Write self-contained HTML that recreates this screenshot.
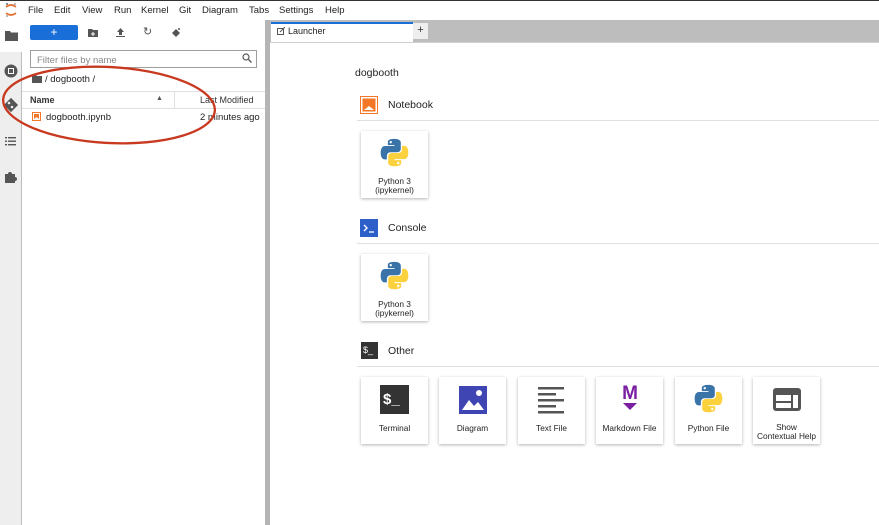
<!DOCTYPE html>
<html><head><style>
*{box-sizing:border-box;margin:0;padding:0}
body{width:879px;height:525px;overflow:hidden;background:#fff;font-family:"Liberation Sans",Arial,sans-serif;position:relative;color:#222}
.a{position:absolute}
.menu span{position:absolute;top:5px;font-size:9.5px;color:#222}
.card{position:absolute;width:67px;height:67px;background:#fff;box-shadow:0 1px 3px rgba(0,0,0,.3);text-align:center;font-size:8.3px;color:#222}
.card .lbl{position:absolute;left:0;right:0;top:46px;line-height:9px}
.hdr{position:absolute;left:388px;font-size:10.5px;color:#222}
.line{position:absolute;left:357px;right:0;height:1px;background:#e0e0e0}
</style></head><body>
<div class="a" style="left:0;top:0;width:879px;height:1px;background:#333"></div>
<svg class="a" style="left:4px;top:2px" width="14" height="16" viewBox="0 0 14 16"><path d="M2 5 Q7 1 12 5" stroke="#e46e2e" stroke-width="1.6" fill="none"/><path d="M2 11 Q7 15 12 11" stroke="#e46e2e" stroke-width="1.6" fill="none"/><circle cx="3" cy="2" r="1" fill="#666"/><circle cx="11" cy="2" r=".8" fill="#666"/><circle cx="3" cy="14" r=".8" fill="#666"/></svg>
<div class="menu">
<span style="left:28px">File</span><span style="left:54px">Edit</span><span style="left:82px">View</span><span style="left:114px">Run</span><span style="left:141px">Kernel</span><span style="left:179px">Git</span><span style="left:202px">Diagram</span><span style="left:249px">Tabs</span><span style="left:279px">Settings</span><span style="left:325px">Help</span>
</div>
<div class="a" style="left:0;top:20px;width:22px;height:505px;background:#eeeeee;border-right:1px solid #bdbdbd"></div>
<div class="a" style="left:0;top:20px;width:22px;height:32px;background:#fff"></div>
<svg class="a" style="left:5px;top:30px" width="13" height="11"><path d="M0 1h5l1 1.5h7v8.5h-13z" fill="#555"/></svg>
<svg class="a" style="left:4px;top:64px" width="14" height="14"><circle cx="7" cy="7" r="6.5" fill="#555"/><rect x="4" y="4" width="6" height="6" fill="#fff"/><rect x="5" y="5" width="4" height="4" fill="#555"/></svg>
<svg class="a" style="left:3px;top:97px" width="16" height="16"><rect x="3" y="3" width="10" height="10" transform="rotate(45 8 8)" fill="#555"/><circle cx="6" cy="6" r="1.3" fill="#eee"/><circle cx="9" cy="10" r="1.3" fill="#eee"/></svg>
<svg class="a" style="left:5px;top:136px" width="12" height="10"><g fill="#555"><rect x="0" y="1" width="2" height="1.4"/><rect x="3" y="1" width="8" height="1.4"/><rect x="0" y="4.5" width="2" height="1.4"/><rect x="3" y="4.5" width="8" height="1.4"/><rect x="0" y="8" width="2" height="1.4"/><rect x="3" y="8" width="8" height="1.4"/></g></svg>
<svg class="a" style="left:4px;top:170px" width="13" height="13"><path d="M1 4h3a2 2 0 1 1 4 0h3v3a2 2 0 1 1 0 4v2h-10z" fill="#555"/></svg>
<div class="a" style="left:30px;top:25px;width:48px;height:15px;background:#1a6ed8;border-radius:2px;color:#fff;text-align:center;font-size:12px;line-height:14px">+</div>
<svg class="a" style="left:88px;top:28px" width="10" height="9"><path d="M0 1h4l1 1h5v7h-10z" fill="#555"/><path d="M5 4v4M3 6h4" stroke="#fff"/></svg>
<svg class="a" style="left:116px;top:28px" width="9" height="9"><path d="M4.5 0l3.5 4h-2v3h-3v-3h-2z M0 8h9v1h-9z" fill="#555"/></svg>
<div class="a" style="left:143px;top:25px;font-size:11px;color:#555">↻</div>
<svg class="a" style="left:171px;top:27px" width="10" height="11"><path d="M1 6l4-4 4 4-4 4z" fill="#555"/><circle cx="8" cy="2" r="1" fill="#555"/></svg>
<div class="a" style="left:30px;top:50px;width:227px;height:18px;border:1px solid #9e9e9e;font-size:9.5px;color:#888;padding:4px 0 0 6px">Filter files by name</div>
<svg class="a" style="left:242px;top:53px" width="10" height="10"><circle cx="4" cy="4" r="3" stroke="#555" stroke-width="1.2" fill="none"/><path d="M6.5 6.5l3 3" stroke="#555" stroke-width="1.3"/></svg>
<svg class="a" style="left:32px;top:75px" width="10" height="8"><path d="M0 0h4l1 1h5v7h-10z" fill="#555"/></svg>
<div class="a" style="left:45px;top:74px;font-size:9.5px">/ dogbooth /</div>
<div class="a" style="left:22px;top:91px;width:243px;height:1px;background:#e0e0e0"></div>
<div class="a" style="left:22px;top:108px;width:243px;height:1px;background:#e0e0e0"></div>
<div class="a" style="left:174px;top:92px;width:1px;height:16px;background:#e0e0e0"></div>
<div class="a" style="left:30px;top:95px;font-size:9px;font-weight:bold;color:#333">Name</div>
<div class="a" style="left:156px;top:95px;font-size:7px;color:#555">▲</div>
<div class="a" style="left:200px;top:95px;font-size:9px;color:#333">Last Modified</div>
<svg class="a" style="left:32px;top:112px" width="9" height="9"><rect x=".5" y=".5" width="8" height="8" fill="none" stroke="#f37726"/><path d="M2 2h5v5l-2.5-2-2.5 2z" fill="#f37726"/></svg>
<div class="a" style="left:46px;top:112px;font-size:9.5px">dogbooth.ipynb</div>
<div class="a" style="left:200px;top:112px;font-size:9.5px">2 minutes ago</div>
<svg class="a" style="left:0;top:60px" width="270" height="90"><ellipse cx="109" cy="45" rx="106" ry="38" fill="none" stroke="#c8391f" stroke-width="2.3" transform="rotate(3 109 45)"/></svg>
<div class="a" style="left:265px;top:20px;width:5px;height:505px;background:#b5b5b5"></div>
<div class="a" style="left:270px;top:20px;width:609px;height:22px;background:#bdbdbd"></div>
<div class="a" style="left:271px;top:22px;width:142px;height:21px;background:#fff;border-top:2px solid #1a6ed8"></div>
<svg class="a" style="left:277px;top:27px" width="8" height="8"><rect x=".5" y="1.5" width="6" height="6" fill="none" stroke="#555"/><path d="M3 5l5-5" stroke="#555"/></svg>
<div class="a" style="left:288px;top:26px;font-size:9px">Launcher</div>
<div class="a" style="left:413px;top:23px;width:15px;height:16px;background:#eee;text-align:center;font-size:11px;line-height:15px;color:#333">+</div>
<div class="a" style="left:270px;top:42px;width:609px;height:1px;background:#d0d0d0"></div>
<div class="a" style="left:355px;top:67px;font-size:10.5px">dogbooth</div>
<svg class="a" style="left:360px;top:96px" width="18" height="18"><rect x=".5" y=".5" width="17" height="17" fill="#fff" stroke="#f37726"/><rect x="2.5" y="2.5" width="13" height="13" fill="#f37726"/><path d="M4 14l5-4 5 4z" fill="#fff"/></svg>
<div class="hdr" style="top:99px">Notebook</div>
<div class="line" style="top:120px"></div>
<svg width="0" height="0" style="position:absolute"><defs>
<g id="py"><path d="M15.9 2c-7.5 0-7 3.2-7 3.2v3.4h7.1v1H6S1.3 9.1 1.3 16.6s4.1 7.2 4.1 7.2h2.5v-3.5s-.1-4.1 4-4.1h6.9s3.9.1 3.9-3.7V6.1S23.2 2 15.9 2zm-3.9 2.2a1.3 1.3 0 1 1 0 2.6 1.3 1.3 0 0 1 0-2.6z" fill="#3a73a8"/><path d="M16.1 31.2c7.5 0 7-3.2 7-3.2v-3.4h-7.1v-1H26s4.7.5 4.7-7-4.1-7.2-4.1-7.2h-2.5v3.5s.1 4.1-4 4.1h-6.9s-3.9-.1-3.9 3.7v6.4s-.6 4.1 6.8 4.1zm3.9-2.2a1.3 1.3 0 1 1 0-2.6 1.3 1.3 0 0 1 0 2.6z" fill="#fcd13e"/></g></defs></svg>
<div class="card" style="left:361px;top:131px"><svg style="position:absolute;left:18px;top:6px" width="31" height="31" viewBox="0 0 32 33"><use href="#py"/></svg><div class="lbl">Python 3<br>(ipykernel)</div></div>
<svg class="a" style="left:360px;top:219px" width="18" height="18"><rect width="18" height="18" fill="#2c60c8"/><path d="M4 6l3 3-3 3" stroke="#fff" stroke-width="1.4" fill="none"/><path d="M9 13h5" stroke="#fff" stroke-width="1.3"/></svg>
<div class="hdr" style="top:222px">Console</div>
<div class="line" style="top:243px"></div>
<div class="card" style="left:361px;top:254px"><svg style="position:absolute;left:18px;top:6px" width="31" height="31" viewBox="0 0 32 33"><use href="#py"/></svg><div class="lbl">Python 3<br>(ipykernel)</div></div>
<div class="a" style="left:361px;top:342px;width:17px;height:17px;background:#333;color:#fff;font-size:9px;line-height:17px;padding-left:2px">$_</div>
<div class="hdr" style="top:345px">Other</div>
<div class="line" style="top:366px"></div>
<div class="card" style="left:361px;top:377px"><div style="position:absolute;left:19px;top:8px;width:29px;height:29px;background:#333;color:#fff;font-size:15px;line-height:29px;text-align:left;padding-left:3px;font-weight:bold">$_</div><div class="lbl" style="top:47px">Terminal</div></div>
<div class="card" style="left:439px;top:377px"><svg style="position:absolute;left:20px;top:9px" width="28" height="28"><rect width="28" height="28" fill="#3f46b3"/><path d="M3 24l7-10 5 6 4-4 6 8z" fill="#fff"/><circle cx="20" cy="7" r="3" fill="#fff"/></svg><div class="lbl" style="top:47px">Diagram</div></div>
<div class="card" style="left:518px;top:377px"><svg style="position:absolute;left:20px;top:9px" width="28" height="28"><g fill="#555"><rect x="0" y="1" width="26" height="2.5"/><rect x="0" y="7" width="18" height="2.5"/><rect x="0" y="13" width="26" height="2.5"/><rect x="0" y="19" width="18" height="2.5"/><rect x="0" y="25" width="26" height="2.5"/></g></svg><div class="lbl" style="top:47px">Text File</div></div>
<div class="card" style="left:596px;top:377px"><svg style="position:absolute;left:22px;top:6px" width="24" height="30"><text x="12" y="16" text-anchor="middle" font-family="Liberation Sans" font-weight="bold" font-size="19" fill="#7b1fa2">M</text><path d="M5 20h14l-7 7z" fill="#7b1fa2"/></svg><div class="lbl" style="top:47px">Markdown File</div></div>
<div class="card" style="left:675px;top:377px"><svg style="position:absolute;left:18px;top:6px" width="31" height="31" viewBox="0 0 32 33"><use href="#py"/></svg><div class="lbl" style="top:47px">Python File</div></div>
<div class="card" style="left:753px;top:377px"><svg style="position:absolute;left:19px;top:10px" width="30" height="25"><rect x="1" y="1" width="28" height="23" rx="3" fill="#555"/><rect x="4" y="8" width="15" height="6" fill="#fff"/><rect x="4" y="16" width="15" height="5" fill="#fff"/><rect x="21" y="8" width="5" height="13" fill="#fff"/></svg><div class="lbl" style="top:46px">Show<br>Contextual Help</div></div>
</body></html>
